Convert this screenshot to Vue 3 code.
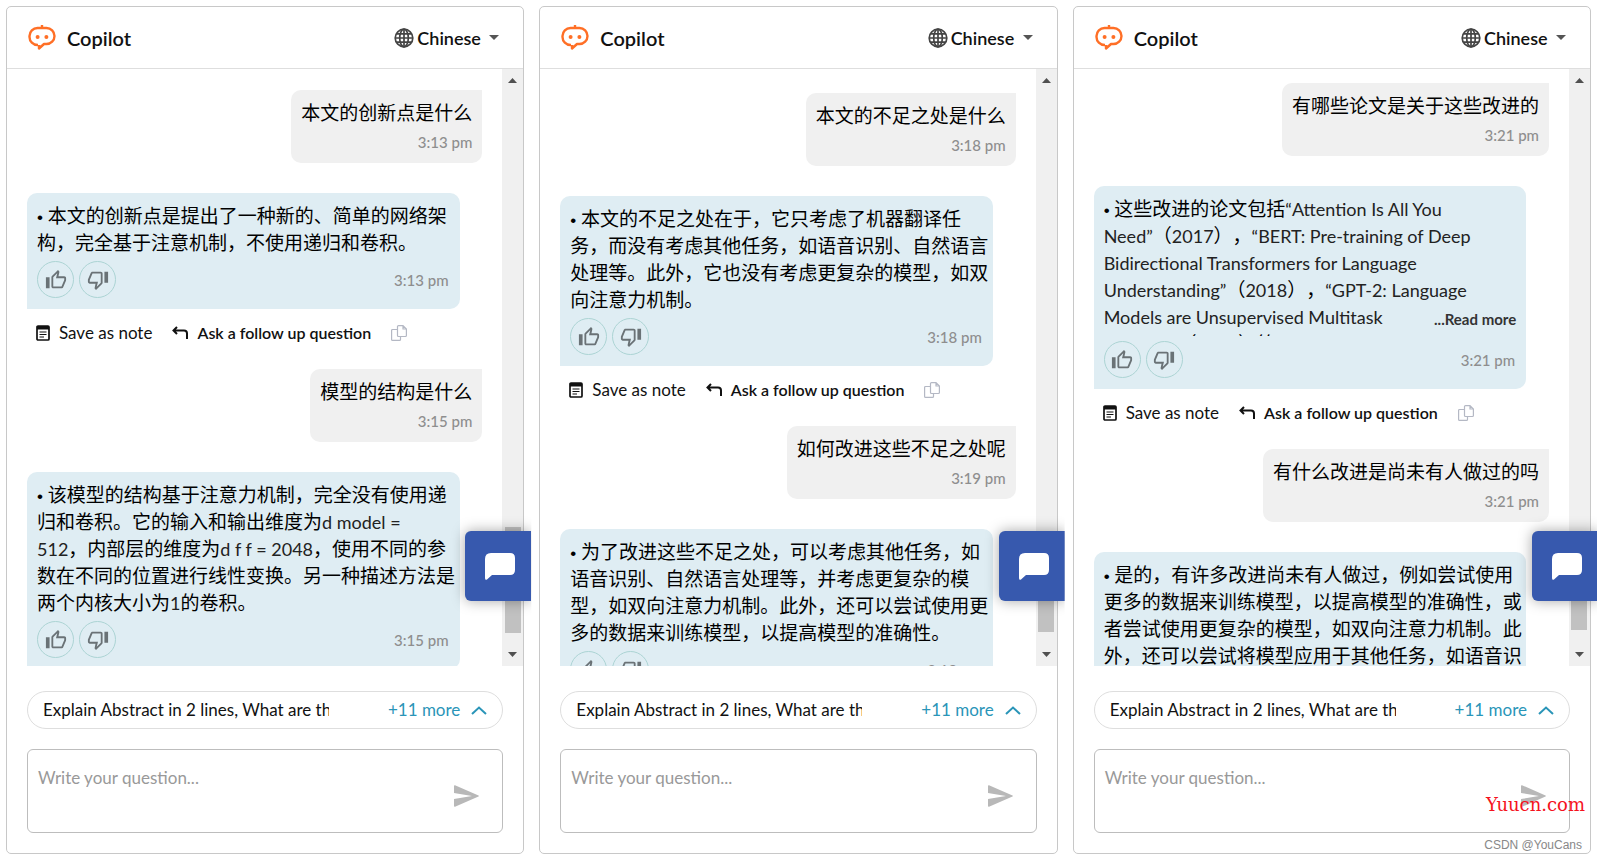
<script setup>
import { ref } from 'vue'

const language = ref('Chinese')

const panels = ref([
  {
    id: 'one',
    draft: '',
    offset: 21,
    thumb: { size: 106, end: 19 },
    messages: [
      { from: 'user', time: '3:13 pm', lines: ['本文的创新点是什么'] },
      {
        from: 'bot',
        time: '3:13 pm',
        lines: ['• 本文的创新点是提出了一种新的、简单的网络架', '构，完全基于注意机制，不使用递归和卷积。'],
      },
      { from: 'user', time: '3:15 pm', lines: ['模型的结构是什么'] },
      {
        from: 'bot',
        time: '3:15 pm',
        lines: [
          '• 该模型的结构基于注意力机制，完全没有使用递',
          '归和卷积。它的输入和输出维度为d model =',
          '512，内部层的维度为d f f = 2048，使用不同的参',
          '数在不同的位置进行线性变换。另一种描述方法是',
          '两个内核大小为1的卷积。',
        ],
      },
    ],
  },
  {
    id: 'two',
    draft: '',
    offset: 24,
    thumb: { size: 96, end: 20 },
    messages: [
      { from: 'user', time: '3:18 pm', lines: ['本文的不足之处是什么'] },
      {
        from: 'bot',
        time: '3:18 pm',
        lines: [
          '• 本文的不足之处在于，它只考虑了机器翻译任',
          '务，而没有考虑其他任务，如语音识别、自然语言',
          '处理等。此外，它也没有考虑更复杂的模型，如双',
          '向注意力机制。',
        ],
      },
      { from: 'user', time: '3:19 pm', lines: ['如何改进这些不足之处呢'] },
      {
        from: 'bot',
        time: '3:19 pm',
        lines: [
          '• 为了改进这些不足之处，可以考虑其他任务，如',
          '语音识别、自然语言处理等，并考虑更复杂的模',
          '型，如双向注意力机制。此外，还可以尝试使用更',
          '多的数据来训练模型，以提高模型的准确性。',
        ],
      },
    ],
  },
  {
    id: 'three',
    draft: '',
    offset: 14,
    thumb: { size: 90, end: 22 },
    messages: [
      { from: 'user', time: '3:21 pm', lines: ['有哪些论文是关于这些改进的'] },
      {
        from: 'bot',
        time: '3:21 pm',
        collapsed: true,
        lines: [
          '• 这些改进的论文包括“Attention Is All You',
          'Need”（2017），“BERT: Pre-training of Deep',
          'Bidirectional Transformers for Language',
          'Understanding”（2018），“GPT-2: Language',
          'Models are Unsupervised Multitask',
          'Learners”（2019）等。',
        ],
      },
      { from: 'user', time: '3:21 pm', lines: ['有什么改进是尚未有人做过的吗'] },
      {
        from: 'bot',
        time: '3:21 pm',
        lines: [
          '• 是的，有许多改进尚未有人做过，例如尝试使用',
          '更多的数据来训练模型，以提高模型的准确性，或',
          '者尝试使用更复杂的模型，如双向注意力机制。此',
          '外，还可以尝试将模型应用于其他任务，如语音识',
        ],
      },
    ],
  },
])

// Splits a line into bullet, Latin and Chinese runs so each can take its own style.
function runs(line) {
  return line
    .split(/(• |[A-Za-z0-9“”:=-][A-Za-z0-9“”:=\-\s]*)/)
    .filter(Boolean)
    .map((text) => ({
      text,
      kind: text[0] === '•' ? 'bullet' : /^[A-Za-z0-9“”:=-]/.test(text) ? 'latin' : 'han',
    }))
}
</script>

<template>
  <main class="page">
    <section v-for="panel in panels" :key="panel.id" class="panel">
      <header class="head">
        <svg class="logo" viewBox="0 0 28 26" aria-hidden="true">
          <path d="M10 20H9.500A8 8 0 0 1 1.500 12V11A8 8 0 0 1 9.500 3H18.500A8 8 0 0 1 26.500 11A8 8 0 0 1 18.500 19H16L11 23.500V20" fill="none" stroke="#ff6f26" stroke-width="2.400" stroke-linejoin="round" />
          <path d="M14 0v3" stroke="#ff6f26" stroke-width="2.400" />
          <circle cx="9.600" cy="12" r="2" fill="#ff6f26" />
          <circle cx="18.400" cy="12" r="2" fill="#ff6f26" />
        </svg>
        <h1 class="title">Copilot</h1>
        <label class="language">
          <svg class="globe" viewBox="0 0 20 20" fill="none" stroke="#444" stroke-width="1.700" aria-hidden="true">
            <circle cx="10" cy="10" r="8.800" />
            <ellipse cx="10" cy="10" rx="4.300" ry="8.800" />
            <path d="M10 1v18M1 10h18M2.500 5.800h15M2.500 14.200h15" />
          </svg>
          <select v-model="language" class="select" aria-label="Language">
            <option>Chinese</option>
          </select>
          <svg class="caret" viewBox="0 0 10 5" aria-hidden="true"><path d="M0 0h10L5 5z" fill="#555" /></svg>
        </label>
      </header>

      <div class="body">
        <div class="messages" :style="{ paddingTop: panel.offset + 'px' }">
          <template v-for="(m, i) in panel.messages" :key="i">
            <article v-if="m.from === 'user'" class="bubble user">
              <p v-for="line in m.lines" :key="line" class="line">{{ line }}</p>
              <time class="time">{{ m.time }}</time>
            </article>
            <template v-else>
              <article class="bubble bot">
                <div class="answer" :class="{ collapsed: m.collapsed }">
                  <p v-for="line in m.lines" :key="line" class="line"><span v-for="(run, r) in runs(line)" :key="r" :class="run.kind">{{ run.text }}</span></p>
                  <button v-if="m.collapsed" type="button" class="more">...Read more</button>
                </div>
                <div class="feedback">
                  <button type="button" class="vote" aria-label="Helpful">
                    <svg viewBox="0 0 24 24" aria-hidden="true"><path d="M9 21h9c.83 0 1.540-.5 1.840-1.220l3.020-7.050c.09-.23.14-.47.14-.73v-2c0-1.100-.9-2-2-2h-6.310l.95-4.570.03-.32c0-.41-.17-.79-.44-1.060L14.170 1 7.580 7.590C7.220 7.950 7 8.450 7 9v10c0 1.100.9 2 2 2zM9 9l4.340-4.340L12 10h9v2l-3 7H9V9zM1 9h4v12H1z" /></svg>
                  </button>
                  <button type="button" class="vote down" aria-label="Not helpful">
                    <svg viewBox="0 0 24 24" aria-hidden="true"><path d="M9 21h9c.83 0 1.540-.5 1.840-1.220l3.020-7.050c.09-.23.14-.47.14-.73v-2c0-1.100-.9-2-2-2h-6.310l.95-4.570.03-.32c0-.41-.17-.79-.44-1.060L14.170 1 7.580 7.590C7.220 7.950 7 8.450 7 9v10c0 1.100.9 2 2 2zM9 9l4.340-4.340L12 10h9v2l-3 7H9V9zM1 9h4v12H1z" /></svg>
                  </button>
                  <time class="time">{{ m.time }}</time>
                </div>
              </article>
              <div v-if="i < panel.messages.length - 1" class="actions">
                <button type="button" class="action">
                  <svg class="note" viewBox="0 0 14 16" aria-hidden="true">
                    <rect x="1" y="1" width="12" height="14" rx="1" fill="none" stroke="#111" stroke-width="1.700" />
                    <path d="M1 1h12v3.500H1z" fill="#111" />
                    <path d="M3.500 7h7M3.500 9.500h7M3.500 12h4.500" stroke="#111" stroke-width="1.200" />
                  </svg>
                  Save as note
                </button>
                <button type="button" class="action strong">
                  <svg class="reply" viewBox="0 0 16 14" aria-hidden="true">
                    <path d="M5 1L1.500 4.500L5 8M1.500 4.500H12a3 3 0 0 1 3 3V13" fill="none" stroke="#111" stroke-width="2" />
                  </svg>
                  Ask a follow up question
                </button>
                <button type="button" class="action" aria-label="Copy">
                  <svg class="copy" viewBox="0 0 16 16" fill="none" stroke="#b4b8c4" stroke-width="1.200" aria-hidden="true">
                    <path d="M6.500 1.600a1 1 0 0 1 1-1H12L15.400 4v6.500a1 1 0 0 1-1 1H7.500a1 1 0 0 1-1-1zM12 .6V4h3.400" />
                    <path d="M6.500 4.500H1.600a1 1 0 0 0-1 1v8.900a1 1 0 0 0 1 1h6.900a1 1 0 0 0 1-1V11.500" />
                  </svg>
                </button>
              </div>
            </template>
          </template>
        </div>
        <div class="scrollbar" aria-hidden="true">
          <svg class="arrow" viewBox="0 0 9 5"><path d="M0 5h9L4.500 0z" fill="#505050" /></svg>
          <div class="thumb" :style="{ height: panel.thumb.size + 'px', marginBottom: panel.thumb.end + 'px' }"></div>
          <svg class="arrow" viewBox="0 0 9 5"><path d="M0 0h9L4.500 5z" fill="#505050" /></svg>
        </div>
      </div>

      <form class="foot" @submit.prevent>
        <button type="button" class="suggest">
          <span class="prompts">Explain Abstract in 2 lines, What are the</span>
          <span class="count">+11 more</span>
          <svg class="chevron" viewBox="0 0 16 9" aria-hidden="true"><path d="M1 8l7-6.500L15 8" fill="none" stroke="#2a95b8" stroke-width="2" /></svg>
        </button>
        <div class="composer">
          <textarea v-model="panel.draft" class="input" placeholder="Write your question..." aria-label="Write your question"></textarea>
          <button type="submit" class="send" aria-label="Send">
            <svg viewBox="0 0 25 22" aria-hidden="true"><path d="M1 0.200Q0 0 0 1V8L18 11L0 14V21Q0 22 1 21.800L24.500 11.600Q25.300 11 24.500 10.400z" fill="#b8b8b8" /></svg>
          </button>
        </div>
      </form>

      <button type="button" class="fab" aria-label="Open chat">
        <svg viewBox="0 0 30 27" aria-hidden="true"><path d="M6 0H25Q30 0 30 5V17Q30 22 25 22H7L2 26.600Q0 27.500 0 25V6Q0 0 6 0z" fill="#fff" /></svg>
      </button>
    </section>
    <span class="mark site">Yuucn.com</span>
    <span class="mark credit">CSDN @YouCans</span>
  </main>
</template>

<style>
body {
  margin: 0;
  background: #fff;
}
</style>

<style scoped>
.page {
  position: relative;
  box-sizing: border-box;
  height: 100vh;
  min-height: 560px;
  padding: 6px;
  display: grid;
  grid-template-columns: repeat(3, minmax(0, 1fr));
  gap: 15px;
  overflow: hidden;
  font-family: Lato, "Noto Sans CJK SC", sans-serif;
  font-size: 17px;
  color: #111;
}

button,
select,
textarea {
  margin: 0;
  padding: 0;
  border: 0;
  background: none;
  font: inherit;
  color: inherit;
}

svg {
  display: block;
  flex: none;
}

.panel {
  position: relative;
  display: flex;
  flex-direction: column;
  min-height: 0;
  border: 1px solid #c8c8c8;
  border-radius: 5px;
}

.head {
  display: flex;
  align-items: center;
  height: 61px;
  padding: 0 24px 0 21px;
  border-bottom: 1px solid #dedede;
}

.logo {
  width: 28px;
  height: 26px;
}

.title {
  margin: 0 auto 0 11px;
  font-size: 20px;
  line-height: 24px;
  font-weight: 600;
}

.language {
  display: flex;
  align-items: center;
  font-size: 18px;
  font-weight: 600;
}

.globe {
  width: 20px;
  height: 20px;
  margin-right: 3px;
}

.select {
  appearance: none;
  outline: none;
}

.caret {
  width: 10px;
  height: 5px;
  margin-left: 8px;
}

.body {
  flex: 1;
  display: flex;
  min-height: 0;
}

.messages {
  flex: 1;
  min-width: 0;
  display: flex;
  flex-direction: column;
  align-items: flex-start;
  padding: 0 20px;
  overflow: hidden;
}

.bubble {
  box-sizing: border-box;
  flex: none;
  padding: 9px 10px 11px;
}

.user {
  align-self: flex-end;
  display: flex;
  flex-direction: column;
  margin-bottom: 30px;
  border-radius: 10px 0 10px 10px;
  background: #f0f0f0;
}

.bot {
  width: 95%;
  padding-right: 0;
  border-radius: 10px 10px 10px 0;
  background: #dfedf3;
}

.line {
  margin: 0;
  height: 27px;
  font-size: 19px;
  line-height: 27px;
  white-space: pre;
  text-spacing-trim: space-all;
  color: #000;
}

.latin {
  font-size: 18px;
  color: #222;
}

.bullet {
  font-family: "Liberation Sans", sans-serif;
  font-size: 17px;
}

.time {
  font-size: 15px;
  line-height: 20px;
  font-weight: 500;
  color: #8e8e8e;
}

.user .time {
  margin-top: 6px;
  text-align: right;
}

.answer {
  position: relative;
}

.collapsed {
  height: 141px;
  overflow: hidden;
}

.more {
  position: absolute;
  right: 10px;
  bottom: 7px;
  font-size: 15px;
  line-height: 20px;
  font-weight: 700;
  color: #333;
}

.feedback {
  display: flex;
  align-items: center;
  gap: 5px;
  margin-top: 5px;
  padding-right: 11px;
}

.feedback .time {
  margin-left: auto;
}

.vote {
  box-sizing: border-box;
  width: 37px;
  height: 37px;
  display: grid;
  place-items: center;
  border: 1px solid #acd4d4;
  border-radius: 50%;
}

.vote svg {
  width: 22px;
  height: 22px;
  fill: #6a7276;
}

.down svg {
  transform: rotate(180deg);
}

.actions {
  flex: none;
  display: flex;
  align-items: center;
  gap: 20px;
  height: 20px;
  margin: 14px 0 26px 9px;
}

.action {
  display: flex;
  align-items: center;
  gap: 9px;
  line-height: 20px;
}

.strong {
  font-size: 16px;
  font-weight: 600;
}

.note {
  width: 14px;
  height: 16px;
}

.reply {
  width: 16px;
  height: 14px;
}

.copy {
  width: 16px;
  height: 16px;
}

.scrollbar {
  display: flex;
  flex-direction: column;
  align-items: center;
  width: 21px;
  padding: 9px 0;
  box-sizing: border-box;
  background: #f0f0f0;
}

.arrow {
  width: 9px;
  height: 5px;
}

.thumb {
  width: 16px;
  margin-top: auto;
  background: #c1c1c1;
}

.foot {
  display: flex;
  flex-direction: column;
  gap: 20px;
  padding: 25px 20px 20px;
}

.suggest {
  box-sizing: border-box;
  display: flex;
  align-items: center;
  height: 38px;
  padding: 0 15px;
  border: 1px solid #dedede;
  border-radius: 19px;
  line-height: 24px;
}

.prompts {
  width: 286px;
  overflow: hidden;
  white-space: nowrap;
  text-align: left;
}

.count {
  margin-left: auto;
  color: #2a95b8;
}

.chevron {
  width: 16px;
  height: 9px;
  margin-left: 11px;
}

.composer {
  position: relative;
  display: flex;
}

.input {
  flex: 1;
  box-sizing: border-box;
  height: 84px;
  padding: 16px 60px 10px 10px;
  border: 1px solid #bdbdbd;
  border-radius: 6px;
  line-height: 24px;
  resize: none;
  outline: none;
}

.input::placeholder {
  color: #999;
  opacity: 1;
}

.send {
  position: absolute;
  right: 24px;
  top: 36px;
}

.send svg {
  width: 25px;
  height: 22px;
}

.fab {
  position: absolute;
  right: -8px;
  bottom: 252px;
  width: 66px;
  height: 70px;
  padding-left: 20px;
  border-radius: 6px 0 0 6px;
  background: #3759ae;
  box-shadow: 0 0 14px rgba(0, 0, 0, 0.35);
  clip-path: inset(-20px 0 -20px -20px);
}

.fab svg {
  width: 30px;
  height: 27px;
}

.mark {
  position: absolute;
  white-space: nowrap;
}

.site {
  right: 12px;
  bottom: 43px;
  font-family: "DejaVu Serif", serif;
  font-size: 18px;
  line-height: 24px;
  color: #f5121d;
}

.credit {
  right: 15px;
  bottom: 7px;
  font-family: "Liberation Sans", sans-serif;
  font-size: 12px;
  line-height: 16px;
  color: #888;
}
</style>
